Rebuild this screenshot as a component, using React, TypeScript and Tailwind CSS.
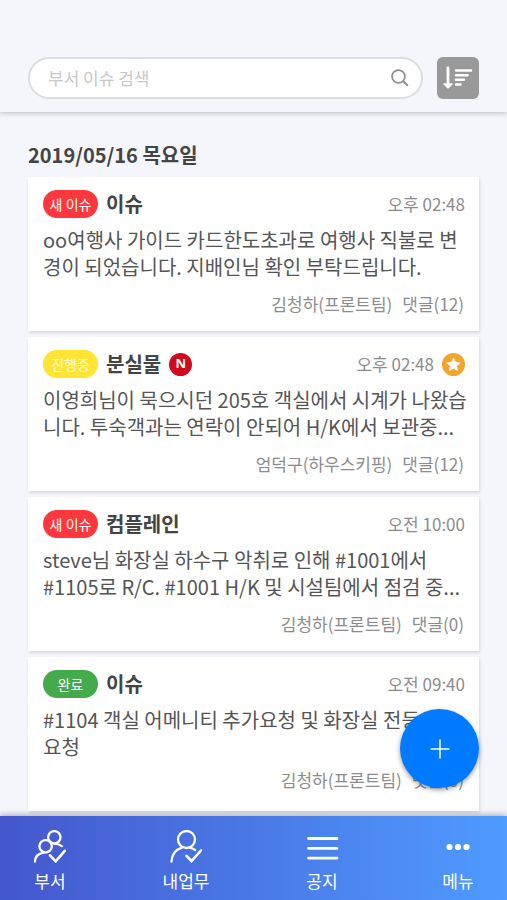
import React from "react";

type Status = "new" | "progress" | "done";

interface Issue {
  id: number;
  status: Status;
  title: string;
  time: string;
  body: string;
  author: string;
  comments: number;
  isNew?: boolean;
  starred?: boolean;
}

const STATUS: Record<Status, { label: string; className: string }> = {
  new: { label: "새 이슈", className: "bg-[#fd373b] text-white" },
  progress: { label: "진행중", className: "bg-[#ffe433] text-white/80" },
  done: { label: "완료", className: "bg-[#43ab4c] text-white" },
};

const ISSUES: Issue[] = [
  {
    id: 1,
    status: "new",
    title: "이슈",
    time: "오후 02:48",
    body: "oo여행사 가이드 카드한도초과로 여행사 직불로 변경이 되었습니다. 지배인님 확인 부탁드립니다.",
    author: "김청하(프론트팀)",
    comments: 12,
  },
  {
    id: 2,
    status: "progress",
    title: "분실물",
    time: "오후 02:48",
    body: "이영희님이 묵으시던 205호 객실에서 시계가 나왔습니다. 투숙객과는 연락이 안되어 H/K에서 보관중...",
    author: "엄덕구(하우스키핑)",
    comments: 12,
    isNew: true,
    starred: true,
  },
  {
    id: 3,
    status: "new",
    title: "컴플레인",
    time: "오전 10:00",
    body: "steve님 화장실 하수구 악취로 인해 #1001에서 #1105로 R/C. #1001 H/K 및 시설팀에서 점검 중...",
    author: "김청하(프론트팀)",
    comments: 0,
  },
  {
    id: 4,
    status: "done",
    title: "이슈",
    time: "오전 09:40",
    body: "#1104 객실 어메니티 추가요청 및 화장실 전등\n요청",
    author: "김청하(프론트팀)",
    comments: 0,
  },
];

function SearchIcon() {
  return (
    <svg width="18" height="18" viewBox="0 0 18 18" fill="none" stroke="#909090" strokeWidth="1.8" aria-hidden="true">
      <circle cx="7.5" cy="7.5" r="6.4" />
      <path d="M12 12l4.8 4.8" strokeWidth="2.2" />
    </svg>
  );
}

function SortIcon() {
  return (
    <svg width="30" height="24" viewBox="0 0 30 24" aria-hidden="true">
      <path d="M3.6 2a1.4 1.4 0 0 1 2.8 0v15.300h2.700q1 .3.4 1.100L5.700 22.300q-.7.6-1.400 0L.5 18.400q-.6-.8.4-1.100h2.700z" fill="#fff" />
      <path
        d="M13 4.500h15M13 9.200h11.500M13 13.800h8M13 18.400h4.500"
        stroke="#fff"
        strokeWidth="2.5"
        strokeLinecap="round"
      />
    </svg>
  );
}

function StarBadge() {
  return (
    <svg width="23" height="23" viewBox="0 0 23 23" role="img" aria-label="중요">
      <circle cx="11.5" cy="11.5" r="11.5" fill="#f3a52b" />
      <path
        d="M11.5 4.900l2 4.400 4.800.5-3.600 3.200 1.100 4.700-4.300-2.500-4.300 2.500 1.100-4.700-3.600-3.200 4.800-.5z"
        fill="#fff"
        stroke="#fff"
        strokeWidth=".6"
        strokeLinejoin="round"
      />
    </svg>
  );
}

function TeamIcon() {
  return (
    <svg width="34" height="34" viewBox="0 0 34 34" fill="none" stroke="#fff" strokeWidth="2.3" strokeLinecap="round" aria-hidden="true">
      <circle cx="21.300" cy="7.300" r="6.200" />
      <circle cx="12.600" cy="16.300" r="6.200" />
      <path d="M2 31.500c.3-4.600 3.400-8 8.400-8.800M20.500 13.700c3.200-.1 6 .7 8.400 2.400" />
      <path d="M17 25.300l5.700 6L31.700 20.800" strokeWidth="2.6" />
    </svg>
  );
}

function MyWorkIcon() {
  return (
    <svg width="34" height="34" viewBox="0 0 34 34" fill="none" stroke="#fff" strokeWidth="2.3" strokeLinecap="round" aria-hidden="true">
      <circle cx="17.500" cy="9.500" r="8.500" />
      <path d="M2.500 31.500c.4-7.200 4.200-12 10.600-14M20.500 17.600c2.200.4 4 1.200 5.600 2.400" />
      <path d="M17.500 25.800l5 5.200L32 20.500" strokeWidth="2.6" />
    </svg>
  );
}

function NoticeIcon() {
  return (
    <svg width="34" height="34" viewBox="0 0 34 34" stroke="#fff" strokeWidth="2.8" strokeLinecap="round" aria-hidden="true">
      <path d="M3.500 8.500h28.500M3.500 18.300h28.500M3.500 28.100h28.500" />
    </svg>
  );
}

function MoreIcon() {
  return (
    <svg width="34" height="34" viewBox="0 0 34 34" fill="#fff" aria-hidden="true">
      <circle cx="8.500" cy="17" r="3.100" />
      <circle cx="17" cy="17" r="3.100" />
      <circle cx="25.500" cy="17" r="3.100" />
    </svg>
  );
}

const NAV = [
  { label: "부서", href: "#team", icon: TeamIcon },
  { label: "내업무", href: "#my-work", icon: MyWorkIcon },
  { label: "공지", href: "#notice", icon: NoticeIcon },
  { label: "메뉴", href: "#menu", icon: MoreIcon },
];

function IssueCard({ issue }: { issue: Issue }) {
  const status = STATUS[issue.status];
  const metaSpacing = issue.status === "done" ? "mt-2 mb-1" : "mt-3";

  return (
    <article className="bg-white pt-[13px] pb-[15px] pl-[15px] shadow-[1px_2px_3px_rgba(0,0,0,0.12)]">
      <div className="flex h-7 items-center pr-[14px]">
        <span className={`flex h-7 w-[55px] shrink-0 items-center justify-center rounded-full text-[14px] ${status.className}`}>
          {status.label}
        </span>
        <h3 className="ml-2 text-[20px] font-bold text-[#444]">{issue.title}</h3>
        {issue.isNew && (
          <span className="ml-2 flex size-[23px] items-center justify-center rounded-full bg-[#cf0a1c] font-['Noto_Sans'] text-[13px] font-bold text-white">
            N
          </span>
        )}
        <div className="ml-auto flex items-center gap-2">
          <time className="text-[17px] text-[#8c8c8c]">{issue.time}</time>
          {issue.starred && <StarBadge />}
        </div>
      </div>
      <p className="mt-2 line-clamp-2 h-[54px] pr-1 text-[20px] leading-[27px] whitespace-pre-line text-[#555]">{issue.body}</p>
      <div className={`flex justify-end gap-2.5 pr-[15px] text-[17px] leading-6 text-[#8c8c8c] ${metaSpacing}`}>
        <span>{issue.author}</span>
        <span>댓글({issue.comments})</span>
      </div>
    </article>
  );
}

export default function App() {
  return (
    <div className="relative flex h-screen flex-col bg-[#f4f6fb] font-['Noto_Sans_CJK_KR',sans-serif]">
      <header className="z-10 flex items-center gap-[14px] px-7 pt-[57px] pb-[13px] shadow-[0_1px_5px_rgba(0,0,0,0.25)]">
        <form className="flex h-[42px] min-w-0 flex-1 items-center rounded-full border-2 border-[#dcdde0] bg-white pr-3 pl-[18px]">
          <input
            type="search"
            aria-label="부서 이슈 검색"
            placeholder="부서 이슈 검색"
            className="min-w-0 flex-1 bg-transparent text-[17px] text-[#444] outline-none placeholder:text-[#c8c8c8]"
          />
          <button type="submit" aria-label="검색" className="shrink-0">
            <SearchIcon />
          </button>
        </form>
        <button type="button" aria-label="정렬" className="flex size-[42px] shrink-0 items-center justify-center rounded-md bg-[#999]">
          <SortIcon />
        </button>
      </header>

      <main className="min-h-0 flex-1 overflow-y-auto px-7 pt-[29px] pb-1">
        <h2 className="text-[20px] leading-7 font-bold text-[#444]">2019/05/16 목요일</h2>
        <div className="mt-2 flex flex-col gap-1.5">
          {ISSUES.map((issue) => (
            <IssueCard key={issue.id} issue={issue} />
          ))}
        </div>
      </main>

      <button
        type="button"
        aria-label="이슈 등록"
        className="absolute right-7 bottom-28 z-20 flex size-[79px] items-center justify-center rounded-full bg-[#007bff] shadow-[0_2px_5px_rgba(0,0,0,0.4)]"
      >
        <svg width="20" height="20" viewBox="0 0 20 20" stroke="#fff" strokeWidth="1.5" aria-hidden="true">
          <path d="M10 .5v19M.5 10h19" />
        </svg>
      </button>

      <nav className="z-10 flex h-[84px] shrink-0 justify-between bg-linear-to-r from-[#4457cd] to-[#4f9bff] pt-[14px] pr-[25px] pl-[26px] shadow-[0_-2px_5px_rgba(0,0,0,0.25)]">
        {NAV.map(({ label, href, icon: Icon }) => (
          <a key={href} href={href} className="flex w-12 flex-col items-center text-[17px] leading-6 whitespace-nowrap text-white">
            <Icon />
            <span className="mt-[5px]">{label}</span>
          </a>
        ))}
      </nav>
    </div>
  );
}
